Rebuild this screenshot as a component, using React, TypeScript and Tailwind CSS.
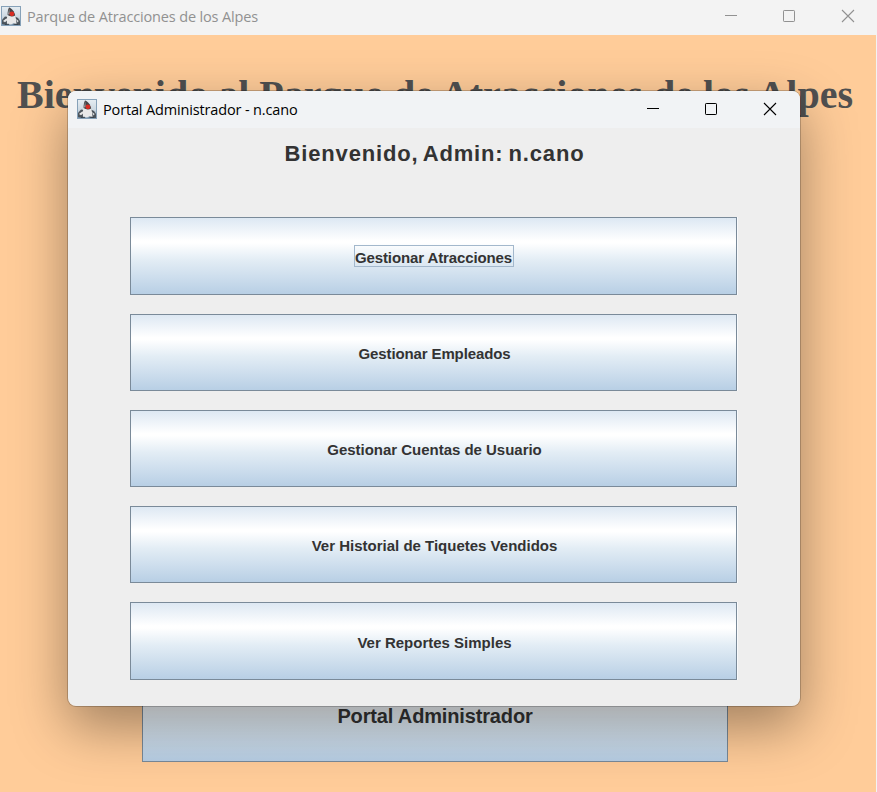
import type { ReactNode } from "react";

function DukeIcon() {
  return (
    <svg width="20" height="20" viewBox="0 0 20 20" className="block shrink-0">
      <defs>
        <linearGradient id="sky" x1="0" y1="0" x2="0" y2="1">
          <stop offset="0" stopColor="#e6edf2" />
          <stop offset="0.55" stopColor="#ccd8e1" />
          <stop offset="1" stopColor="#6f8ca5" />
        </linearGradient>
      </defs>
      <rect x="0.5" y="0.5" width="19" height="19" fill="url(#sky)" stroke="#86a1b8" />
      <path d="M1 14 L4 10.5 L7 11 L7 16 L5 19 L1 18 Z" fill="#4c545b" />
      <path d="M13 10 L17 12 L19 15 L19 19 L14 19 Z" fill="#4c545b" />
      <path d="M6.8 8 L14 8.5 L15.2 14 L15.5 18 L12.5 17.2 L10 18.5 L6 17.8 C5.6 14 6 11 6.8 8 Z" fill="#e9e9e9" />
      <path d="M8 1.5 C10.5 2 13.5 5.5 14.2 9.5 C12 11 8.5 10.6 6.6 9 C6.5 6 7 3 8 1.5 Z" fill="#454447" />
      <path d="M8.2 2.5 L8.6 8 L7 8.4 Z" fill="#a9abad" />
      <path d="M2 15 L5.5 12.3 L6.5 14 L4 16.2 Z M15 13 L17.6 15 L16.6 16.6 Z" fill="#e6e6e6" />
      <circle cx="10.9" cy="7.8" r="2.4" fill="#d92c23" />
      <path d="M4 18.5 L8 18.3 M12.5 18.3 L17 18.5" stroke="#3a444e" strokeWidth="1" fill="none" />
    </svg>
  );
}

function WindowControls({ color }: { color: string }) {
  return (
    <svg width="132" height="14" viewBox="0 0 132 14" className={"block shrink-0 " + color} fill="none" stroke="currentColor">
      <path d="M0 6.5H12" />
      <rect x="58.5" y="1.5" width="11" height="11" rx="0.7" />
      <path d="M117 1L129 13M129 1L117 13" strokeWidth="1.1" />
    </svg>
  );
}

function MetalButton({
  height,
  tracking,
  children,
  focused = false,
}: {
  height: string;
  tracking: string;
  children: ReactNode;
  focused?: boolean;
}) {
  return (
    <button
      className={
        "flex w-full items-center justify-center border border-[#7a8a99] bg-[linear-gradient(180deg,#dde8f3_0%,#ffffff_30%,#ffffff_33%,#e3edf5_55%,#b8cfe5_100%)] pt-[3px] text-[15px] leading-[20px] font-bold whitespace-nowrap text-[#333333] shadow-[1px_0_0_#f8fafc] " +
        height +
        " " +
        tracking
      }
    >
      <span
        className={
          focused
            ? "-mt-[4px] flex h-[22px] w-[160px] items-center justify-center border border-[#a3b8cc] pt-[4px]"
            : "pl-[2px]"
        }
      >
        {children}
      </span>
    </button>
  );
}

export default function App() {
  return (
    <div className="relative h-[792px] w-[877px] overflow-hidden bg-[#f3f3f3] font-['Liberation_Sans',Arial,sans-serif]">
      <div className="flex h-full w-[876px] flex-col bg-[#ffcc99]">
        <header className="flex h-[35px] shrink-0 items-center bg-[#f3f3f3] pl-px">
          <div className="-mt-[3px]"><DukeIcon /></div>
          <span className="-mt-px ml-[6px] flex-1 font-['Open_Sans','Noto_Sans',sans-serif] text-[14.5px] tracking-[-0.15px] whitespace-nowrap text-[#919191]">
            Parque de Atracciones de los Alpes
          </span>
          <div className="-mt-[3px] mr-[19px]"><WindowControls color="text-[#919191]" /></div>
        </header>
        <h1 className="mt-[36px] h-[48px] pr-[6px] text-center font-['Liberation_Serif','Times_New_Roman',serif] text-[40px] leading-[48px] font-bold whitespace-nowrap text-[#505050]">
          Bienvenido al Parque de Atracciones de los Alpes
        </h1>
        <button className="mt-[551px] ml-[142px] flex h-[92px] w-[586px] shrink-0 items-center justify-center border border-[#7a8a99] bg-[linear-gradient(180deg,#dde8f3_0%,#ffffff_30%,#e3edf5_55%,#b8cfe5_100%)] text-[20px] font-bold tracking-[-0.15px] text-[#333333]">
          Portal Administrador
        </button>
      </div>

      <section className="absolute top-[90px] left-[67px] flex h-[617px] w-[734px] flex-col overflow-hidden rounded-[9px] border border-black/20 bg-[#eeeeee] bg-clip-padding shadow-[0_20px_54px_rgba(0,0,0,0.37)]">
        <header className="flex h-[37px] shrink-0 items-center bg-[#f1f3f5] pl-[9px]">
          <div className="-mt-[2px]"><DukeIcon /></div>
          <span className="mt-px ml-[6px] flex-1 font-['Open_Sans','Noto_Sans',sans-serif] text-[14.5px] tracking-[-0.15px] whitespace-nowrap text-black">
            Portal Administrador - n.cano
          </span>
          <div className="-mt-[2px] mr-[21px]"><WindowControls color="text-black" /></div>
        </header>
        <h2 className="mt-[13px] h-[26px] pl-px text-center text-[22px] leading-[26px] font-bold tracking-[0.85px] [word-spacing:-2px] text-[#333333]">
          Bienvenido, Admin: n.cano
        </h2>
        <div className="mt-[50px] ml-[62px] flex w-[607px] flex-col gap-[19px]">
          <MetalButton height="h-[78px]" tracking="tracking-[-0.12px]" focused>Gestionar Atracciones</MetalButton>
          <MetalButton height="h-[77px]" tracking="tracking-[-0.12px]">Gestionar Empleados</MetalButton>
          <MetalButton height="h-[77px]" tracking="tracking-[-0.02px]">Gestionar Cuentas de Usuario</MetalButton>
          <MetalButton height="h-[77px]" tracking="tracking-normal">Ver Historial de Tiquetes Vendidos</MetalButton>
          <MetalButton height="h-[78px]" tracking="tracking-normal">Ver Reportes Simples</MetalButton>
        </div>
      </section>
    </div>
  );
}
